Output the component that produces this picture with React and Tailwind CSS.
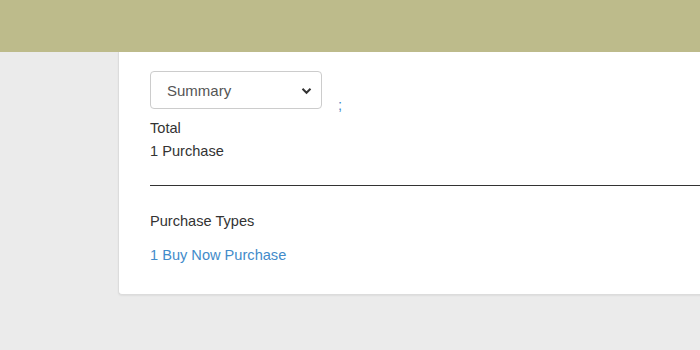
export default function App() {
  return (
    <div
      className="w-[700px] h-[350px] overflow-hidden bg-[#ebebeb]"
      style={{ fontFamily: '"Liberation Sans", Arial, sans-serif' }}
    >
      <div className="h-[52px] bg-[#bdbb8b]" />
      <div className="ml-[118px] w-[640px] bg-white border-l border-b border-[#dcdcdc] rounded-bl-[4px] shadow-[0_1px_2px_rgba(0,0,0,0.06)] pl-[31px] pt-[19px] pb-[27px] text-[14.6px] leading-[23px] text-[#333]">
        <div className="flex items-start">
          <div className="w-[172px] h-[38px] border border-[#cccccc] rounded-[4px] bg-white flex items-center justify-between pl-[16px] pr-[9px] text-[#555] text-[15px]">
            <span>Summary</span>
            <svg width="11" height="8" viewBox="0 0 11 8" className="mt-[1px]">
              <path d="M1.5 1.8 L5.5 5.8 L9.5 1.8" fill="none" stroke="#333" strokeWidth="2" />
            </svg>
          </div>
          <span className="ml-[16px] mt-[22.5px] text-[#428bca]">;</span>
        </div>
        <div>Total</div>
        <div>1 Purchase</div>
        <div className="mt-[22px] border-t border-[#333]" />
        <div className="mt-[24px]">Purchase Types</div>
        <div className="mt-[11px] text-[#428bca]">1 Buy Now Purchase</div>
      </div>
    </div>
  );
}
